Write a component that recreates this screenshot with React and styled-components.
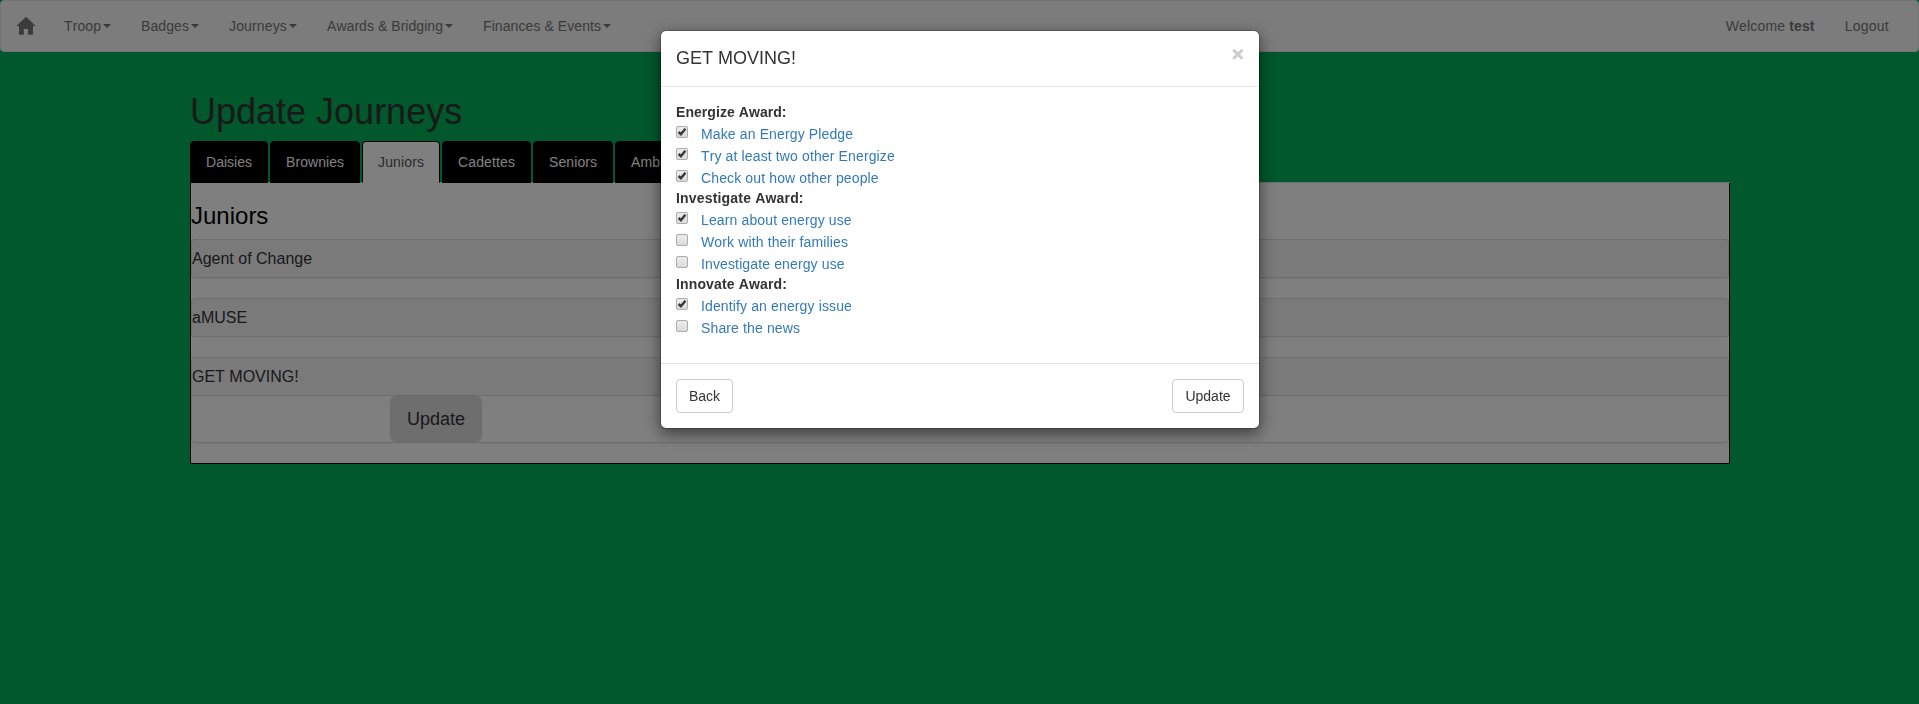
import React from "react";
import styled, { createGlobalStyle } from "styled-components";

const GlobalStyle = createGlobalStyle`
  *, *::before, *::after { box-sizing: border-box; }
  body {
    margin: 0;
    overflow: hidden;
    background: #00b058;
    color: #333;
    font: 14px/20px "Liberation Sans", Arial, sans-serif;
    font-kerning: none;
  }
`;

const Page = styled.div`
  min-height: 704px;
`;

const Navbar = styled.nav`
  display: flex;
  height: 52px;
  border: 1px solid #e7e7e7;
  border-radius: 4px;
  background: #f8f8f8;
  color: #777;
`;

const Brand = styled.a`
  width: 48px;
  padding: 15px;
`;

const HomeIcon = styled.svg`
  display: block;
  width: 20px;
  height: 19px;
`;

const NavItem = styled.a`
  display: flex;
  align-items: center;
  padding: 0 15px;
  letter-spacing: ${(p) => p.$spacing || 0}px;
  white-space: pre;
`;

const Caret = styled.span`
  margin-left: 2px;
  border: 4px solid transparent;
  border-top-color: currentColor;
  border-bottom: 0;
`;

const NavRight = styled.div`
  display: flex;
  margin-left: auto;
  margin-right: 14px;
`;

const Container = styled.main`
  width: 1540px;
  margin-left: 190px;
  padding-top: 40px;
`;

const Title = styled.h1`
  margin: 0 0 10px;
  font-size: 36px;
  font-weight: 400;
  line-height: 39px;
`;

const Tabs = styled.div`
  display: flex;
  gap: 2px;
  height: 42px;
  border-bottom: 1px solid #ddd;
`;

const Tab = styled.a`
  height: 42px;
  padding: 10px 15px;
  border: 1px solid #000;
  border-bottom-color: ${(p) => (p.$active ? "#fff" : "#000")};
  border-radius: 4px 4px 0 0;
  background: ${(p) => (p.$active ? "#fff" : "#000")};
  color: ${(p) => (p.$active ? "#555" : "#fff")};
  letter-spacing: ${(p) => p.$spacing}px;
`;

const TabContent = styled.section`
  border: 1px solid #000;
  border-top: 0;
  background: #fff;
  padding: 20px 0 0;
`;

const Heading = styled.h3`
  margin: 0 0 10px;
  color: #000;
  font-size: 24px;
  font-weight: 400;
  line-height: 26px;
`;

const Panel = styled.div`
  margin-bottom: 20px;
  border: 1px solid #ddd;
  border-radius: 4px;
  box-shadow: 0 1px 1px rgba(0, 0, 0, 0.05);
`;

const PanelHeading = styled.h4`
  margin: 0;
  padding: 10px 0;
  border-radius: 3px 3px 0 0;
  background: #f5f5f5;
  color: #333;
  font-size: 16px;
  font-weight: 400;
  line-height: 17px;
`;

const PanelBody = styled.div`
  display: flex;
  height: 47px;
  padding-left: 198px;
  border-top: 1px solid #ddd;
`;

const LargeButton = styled.button`
  width: 92px;
  height: 46px;
  padding: 0;
  border: 0;
  border-radius: 6px;
  background: #ddd;
  color: #333;
  font: 18px/24px "Liberation Sans", Arial, sans-serif;
`;

const Backdrop = styled.div`
  position: fixed;
  inset: 0;
  background: rgba(0, 0, 0, 0.5);
`;

const Dialog = styled.div`
  position: absolute;
  top: 30px;
  left: 660px;
  width: 600px;
  border: 1px solid rgba(0, 0, 0, 0.2);
  border-radius: 6px;
  background: #fff;
  background-clip: padding-box;
  box-shadow: 0 5px 15px rgba(0, 0, 0, 0.5);
`;

const DialogHeader = styled.header`
  display: flex;
  justify-content: space-between;
  height: 56px;
  padding: 15px;
  border-bottom: 1px solid #e5e5e5;
`;

const DialogTitle = styled.h4`
  margin: 0;
  font-size: 18px;
  font-weight: 400;
  line-height: 25px;
`;

const Close = styled.button`
  height: 21px;
  margin-top: -3px;
  padding: 0;
  border: 0;
  background: none;
  color: #000;
  font: bold 21px/21px "Liberation Sans", Arial, sans-serif;
  -webkit-text-stroke: 0.6px #000;
  opacity: 0.2;
`;

const DialogBody = styled.div`
  padding: 15px 15px 25px;
`;

const AwardName = styled.div`
  font-weight: 700;
  letter-spacing: ${(p) => p.$spacing}px;
`;

const Step = styled.label`
  display: flex;
  align-items: flex-start;
  gap: 13px;
  height: 22px;
  padding-top: 2px;
  color: #337ab7;
  letter-spacing: 0.13px;
`;

const CheckMark = styled.svg`
  display: block;
  width: 12px;
  height: 12px;
  margin-top: 2px;
`;

const DialogFooter = styled.footer`
  display: flex;
  justify-content: space-between;
  padding: 15px;
  border-top: 1px solid #e5e5e5;
`;

const Button = styled.button`
  width: ${(p) => p.$width}px;
  height: 34px;
  padding: 0;
  border: 1px solid #ccc;
  border-radius: 4px;
  background: #fff;
  color: #333;
  font: 14px/20px "Liberation Sans", Arial, sans-serif;
`;

const MENUS = [
  ["Troop", 0.09],
  ["Badges", 0.08],
  ["Journeys", 0.15],
  ["Awards & Bridging", 0.05],
  ["Finances & Events", 0.08],
];
const LEVELS = [
  ["Daisies", 0.02],
  ["Brownies", 0.05],
  ["Juniors", 0.13],
  ["Cadettes", 0.12],
  ["Seniors", 0.08],
  ["Ambassadors", 0.1],
];
const AWARDS = [
  {
    name: "Energize Award:",
    spacing: 0.06,
    steps: [
      ["Make an Energy Pledge", true],
      ["Try at least two other Energize", true],
      ["Check out how other people", true],
    ],
  },
  {
    name: "Investigate Award:",
    spacing: 0.18,
    steps: [
      ["Learn about energy use", true],
      ["Work with their families", false],
      ["Investigate energy use", false],
    ],
  },
  {
    name: "Innovate Award:",
    spacing: 0.14,
    steps: [
      ["Identify an energy issue", true],
      ["Share the news", false],
    ],
  },
];

function Checkbox({ checked }) {
  return (
    <CheckMark viewBox="0 0 12 12">
      <defs>
        <linearGradient id="box" x1="0" y1="0" x2="0" y2="1">
          <stop offset="0.3" stopColor="#e9e9e9" />
          <stop offset="1" stopColor="#dadada" />
        </linearGradient>
      </defs>
      <rect x="0.5" y="0.5" width="11" height="11" rx="1.5" fill="url(#box)" stroke="#acacac" />
      {checked && <path d="M2.6 6 L4.9 8.2 L9.4 2.7" fill="none" stroke="#3a3a3a" strokeWidth="2.5" />}
    </CheckMark>
  );
}

export default function App() {
  return (
    <Page>
      <GlobalStyle />
      <Navbar>
        <Brand>
          <HomeIcon viewBox="0 0 20 19">
            <path
              d="M10 0.7 L15.6 6 L19.4 10 H17 V18.8 H12.1 V13 H7.8 V18.8 H3 V10 H0.4 Z"
              fill="#777"
            />
          </HomeIcon>
        </Brand>
        {MENUS.map(([name, spacing]) => (
          <NavItem key={name} $spacing={spacing}>
            {name}
            <Caret />
          </NavItem>
        ))}
        <NavRight>
          <NavItem $spacing={0.15}>
            Welcome <b>test</b>
          </NavItem>
          <NavItem $spacing={0.25}>Logout</NavItem>
        </NavRight>
      </Navbar>
      <Container>
        <Title>Update Journeys</Title>
        <Tabs>
          {LEVELS.map(([name, spacing]) => (
            <Tab key={name} $spacing={spacing} $active={name === "Juniors"}>
              {name}
            </Tab>
          ))}
        </Tabs>
        <TabContent>
          <Heading>Juniors</Heading>
          <Panel>
            <PanelHeading>Agent of Change</PanelHeading>
          </Panel>
          <Panel>
            <PanelHeading>aMUSE</PanelHeading>
          </Panel>
          <Panel>
            <PanelHeading>GET MOVING!</PanelHeading>
            <PanelBody>
              <LargeButton>Update</LargeButton>
            </PanelBody>
          </Panel>
        </TabContent>
      </Container>
      <Backdrop />
      <Dialog role="dialog">
        <DialogHeader>
          <DialogTitle>GET MOVING!</DialogTitle>
          <Close>×</Close>
        </DialogHeader>
        <DialogBody>
          {AWARDS.map((award) => (
            <React.Fragment key={award.name}>
              <AwardName $spacing={award.spacing}>{award.name}</AwardName>
              {award.steps.map(([text, checked]) => (
                <Step key={text}>
                  <Checkbox checked={checked} />
                  {text}
                </Step>
              ))}
            </React.Fragment>
          ))}
        </DialogBody>
        <DialogFooter>
          <Button $width={57}>Back</Button>
          <Button $width={72}>Update</Button>
        </DialogFooter>
      </Dialog>
    </Page>
  );
}
